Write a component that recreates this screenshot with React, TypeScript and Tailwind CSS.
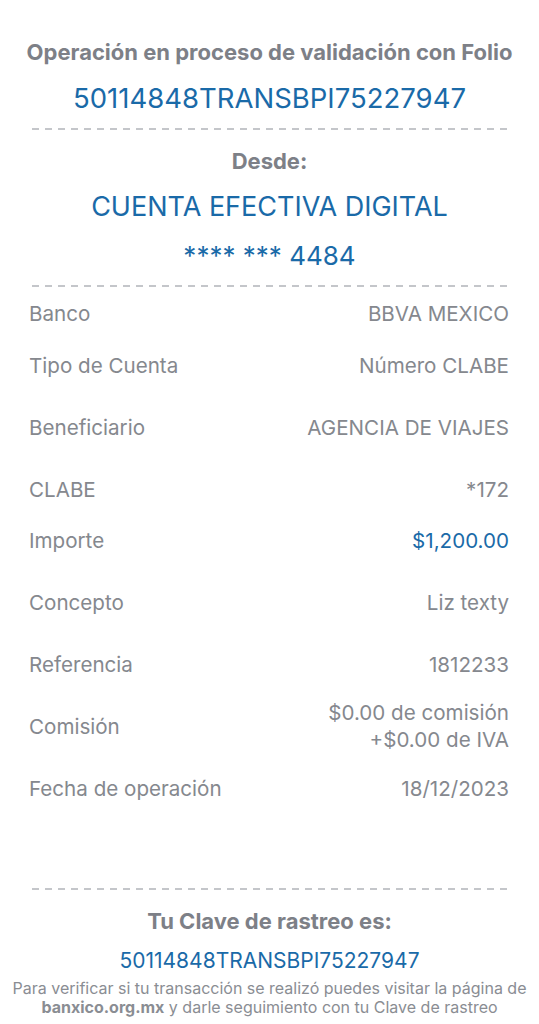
const font = "font-['Inter','Noto_Sans',sans-serif]";

function Dashed({ className = "" }: { className?: string }) {
  return (
    <div
      className={`mx-[32px] h-[2px] bg-[repeating-linear-gradient(to_right,#c4c6ca_0px,#c4c6ca_7px,transparent_7px,transparent_13px)] ${className}`}
    />
  );
}

type Row = { label: string; value: string[]; blue?: boolean; gap: string };

const rows: Row[] = [
  { label: "Banco", value: ["BBVA MEXICO"], gap: "mt-[6px]" },
  { label: "Tipo de Cuenta", value: ["Número CLABE"], gap: "mt-[12px]" },
  { label: "Beneficiario", value: ["AGENCIA DE VIAJES"], gap: "mt-[22px]" },
  { label: "CLABE", value: ["*172"], gap: "mt-[22px]" },
  { label: "Importe", value: ["$1,200.00"], blue: true, gap: "mt-[11px]" },
  { label: "Concepto", value: ["Liz texty"], gap: "mt-[22px]" },
  { label: "Referencia", value: ["1812233"], gap: "mt-[22px]" },
  { label: "Comisión", value: ["$0.00 de comisión", "+$0.00 de IVA"], gap: "mt-[15px]" },
  { label: "Fecha de operación", value: ["18/12/2023"], gap: "mt-[15px]" },
];

export default function App() {
  return (
    <div className={`w-[539px] h-[1024px] bg-white overflow-hidden ${font}`}>
      <div className="pt-[38px] text-center">
        <p className="text-[22px] leading-[28px] font-bold text-[#7d8087]">
          Operación en proceso de validación con Folio
        </p>
        <p className="mt-[16px] text-[27.5px] leading-[32px] text-[#1a6aa8]">
          50114848TRANSBPI75227947
        </p>
      </div>
      <Dashed className="mt-[14px]" />
      <div className="text-center">
        <p className="mt-[18px] text-[22px] leading-[26px] font-bold text-[#7d8087]">Desde:</p>
        <p className="mt-[17px] text-[27px] leading-[32px] text-[#1a6aa8]">
          CUENTA EFECTIVA DIGITAL
        </p>
        <p className="mt-[17px] text-[26px] leading-[32px] text-[#1a6aa8]">**** *** 4484</p>
      </div>
      <Dashed className="mt-[13px]" />
      <div className="px-[29px] pr-[30px]">
        {rows.map((r) => (
          <div
            key={r.label}
            className={`flex items-center justify-between min-h-[40px] ${r.gap}`}
          >
            <span className="text-[20.6px] leading-[27px] text-[#85888e]">{r.label}</span>
            <div className="text-right">
              {r.value.map((v) => (
                <p
                  key={v}
                  className={`text-[20.6px] leading-[27px] ${r.blue ? "text-[#1a6aa8]" : "text-[#85888e]"}`}
                >
                  {v}
                </p>
              ))}
            </div>
          </div>
        ))}
      </div>
      <Dashed className="mt-[80px]" />
      <div className="text-center">
        <p className="mt-[17px] text-[22px] leading-[28px] font-bold text-[#7d8087]">
          Tu Clave de rastreo es:
        </p>
        <p className="mt-[12px] text-[21px] leading-[28px] text-[#1a6aa8]">
          50114848TRANSBPI75227947
        </p>
        <p className="mt-[4px] text-[16px] leading-[19px] text-[#8a8d93] whitespace-nowrap">
          Para verificar si tu transacción se realizó puedes visitar la página de
          <br />
          <span className="font-bold">banxico.org.mx</span> y darle seguimiento con tu Clave de rastreo
        </p>
      </div>
    </div>
  );
}
